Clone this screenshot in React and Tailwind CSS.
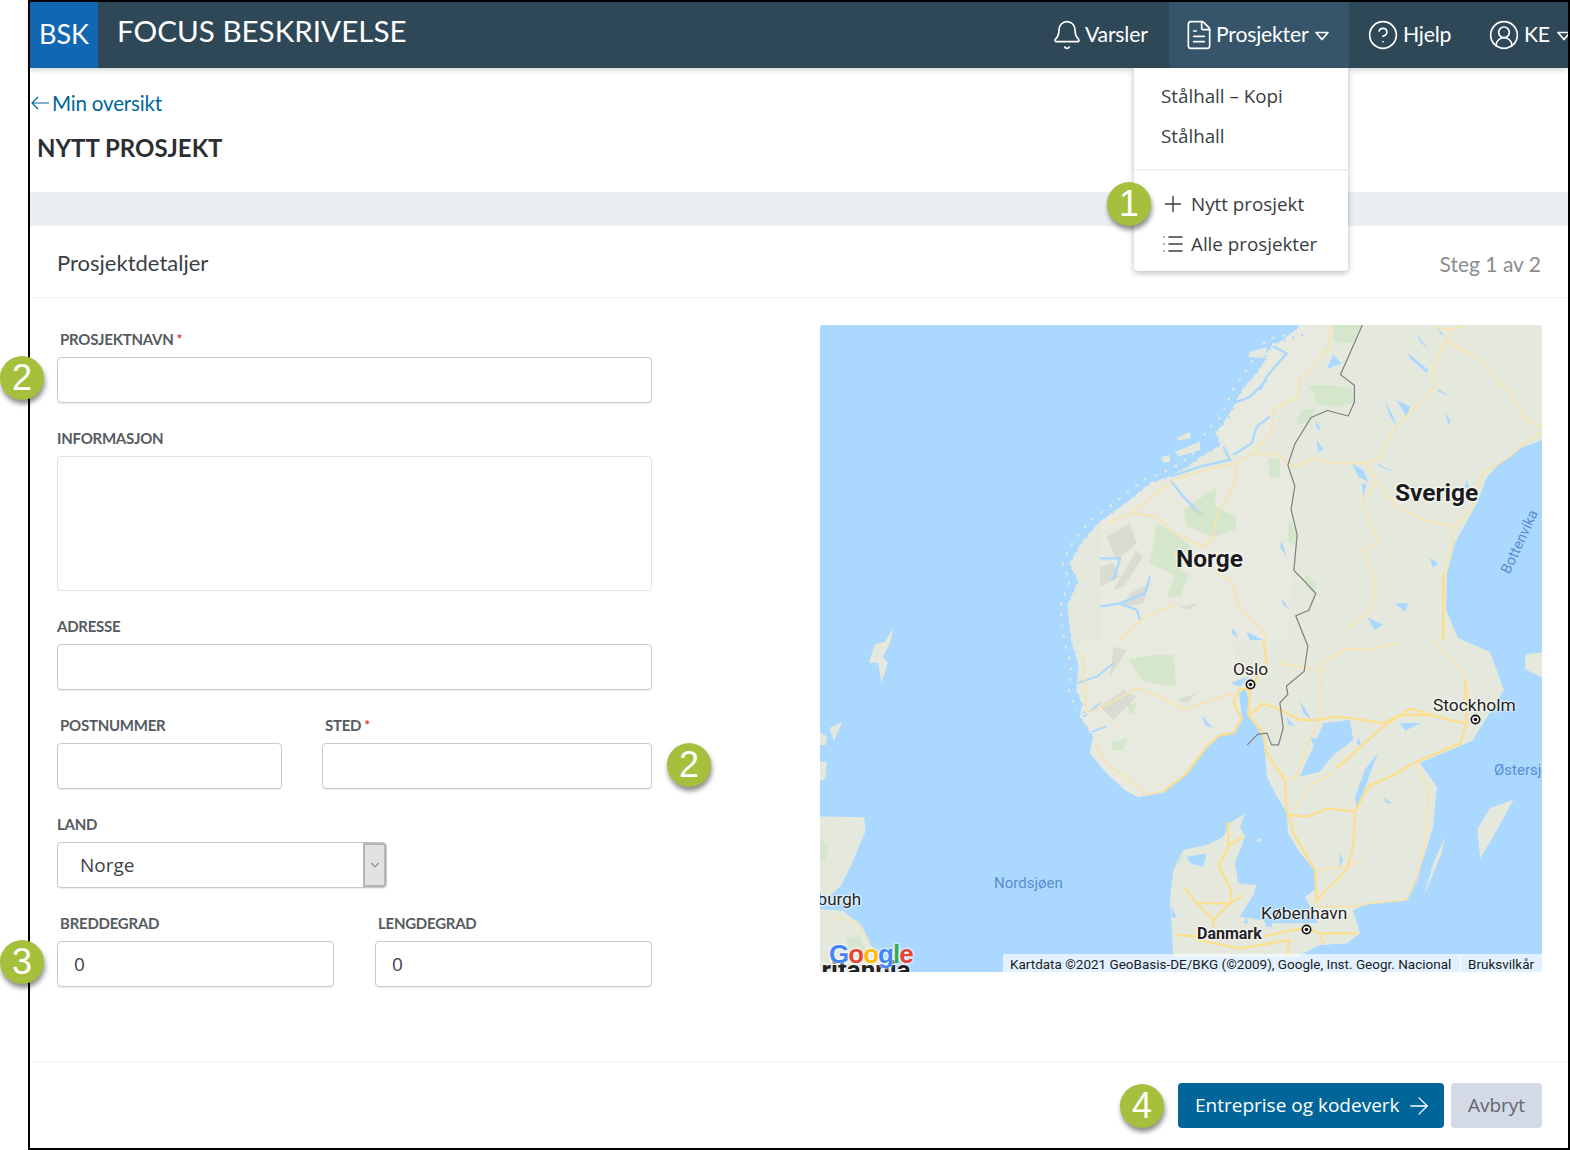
import React from "react";
import { Bell, FileText, CircleHelp, CircleUserRound, Plus, List, ArrowRight, ChevronDown } from "lucide-react";

function Caret({ className }) {
  return (
    <svg viewBox="0 0 14 10" className={className} fill="none" stroke="currentColor" strokeWidth="1.7" strokeLinejoin="round">
      <path d="M1 1.5h12L7 8.5z" />
    </svg>
  );
}

function Badge({ n, className }) {
  return (
    <div className={"absolute z-30 flex h-[44px] w-[44px] items-center justify-center rounded-full bg-[#a5c03c] font-['Liberation_Sans',sans-serif] text-[36px] leading-none text-white shadow-[1px_4px_5px_rgba(0,0,0,0.45)] " + className}>
      {n}
    </div>
  );
}

function Field({ label, req, labelPad, className, children }) {
  return (
    <div className={className}>
      <div className={"flex h-[22px] items-center text-[15px] font-bold leading-[22px] tracking-[-0.25px] text-[#555b60] " + (labelPad ? "pl-[3px]" : "")}>
        {label}
        {req && <span className="ml-[3px] text-[14px] leading-none text-[#e0343c]">*</span>}
      </div>
      <div className="mt-[7px]">{children}</div>
    </div>
  );
}

function Input({ value }) {
  return (
    <div className="flex h-[46px] w-full items-center rounded-[4px] border border-[#c9c9c9] bg-white pl-[16px] font-['Open_Sans',sans-serif] text-[19px] text-[#3c4249] shadow-[0_1px_1px_rgba(0,0,0,0.08)]">
      {value}
    </div>
  );
}

function Pin({ className }) {
  return (
    <svg viewBox="0 0 12 12" className={"absolute h-[11px] w-[11px] " + className}>
      <circle cx="6" cy="6" r="5.4" fill="#111" />
      <circle cx="6" cy="6" r="3.6" fill="#fff" />
      <circle cx="6" cy="6" r="2" fill="#111" />
    </svg>
  );
}

const halo = "[text-shadow:0_0_2px_#fff,0_0_3px_#fff,0_0_3px_#fff]";

const LAND = "#e5e9dd";
const SOUTH = "#e9eadf";
const GREEN = "#d4e7cd";
const WATER = "#aad8fe";
const ROAD = "#f7e3ae";
const HWY = "#fbdf8e";
const ROCK = "#cdd0c8";

function MapArt() {
  return (
    <svg viewBox="820 325 722 647" className="absolute inset-0 h-full w-full">
      <rect x="820" y="325" width="722" height="647" fill={WATER} />
      {/* Scandinavian mainland, in page pixels */}
      <path fill={LAND} d="M1297 325 L1303 335 L1287 342 L1273 343 L1267 353 L1250 352 L1248 357 L1267 358 L1257 372 L1243 388 L1235 403 L1228 420 L1215 432 L1220 445 L1200 457 L1187 467 L1167 477 L1150 483 L1133 497 L1120 507 L1099 522 L1081 543 L1069 564 L1078 581 L1067 606 L1071 640 L1078 665 L1076 690 L1085 711 L1080 717 L1093 737 L1090 753 L1107 773 L1125 790 L1138 797 L1163 792 L1187 773 L1207 747 L1220 735 L1237 730 L1242 717 L1233 700 L1245 688 L1248 697 L1250 717 L1263 737 L1265 753 L1267 777 L1277 797 L1287 813 L1288 833 L1300 853 L1315 870 L1317 888 L1305 897 L1317 920 L1320 945 L1347 943 L1360 933 L1353 910 L1370 903 L1407 900 L1423 860 L1433 827 L1437 787 L1420 763 L1443 753 L1472 741 L1504 690 L1490 652 L1458 638 L1446 610 L1447 573 L1455 543 L1477 503 L1487 477 L1500 463 L1523 447 L1542 440 L1542 325 Z" />
      {/* Zoomed detail of the north */}
      <g transform="translate(1100 310) scale(0.3333)">
        <g fill={SOUTH}>
          <path d="M600 50 L690 50 L640 180 L560 290 L510 380 L440 430 L400 440 L350 370 L420 260 L480 180 L520 110 Z" />
          <path d="M400 450 L560 440 L590 700 L560 990 L0 990 L0 640 L140 530 Z" />
        </g>
        <g fill={GREEN}>
          <path d="M700 45 L785 45 L755 100 L700 95 Z" />
          <path d="M620 225 L690 225 L755 235 L760 280 L710 290 L650 285 L640 250 Z" />
          <path d="M600 300 L650 295 L625 340 L590 345 Z" />
          <path d="M505 445 L540 445 L540 500 L510 505 Z" />
          <path d="M565 625 L590 660 L590 705 L565 700 Z" />
          <path d="M620 790 L650 825 L640 850 L610 810 Z" />
          <path d="M250 600 L350 530 L345 590 L410 620 L405 660 L340 680 L260 650 Z" />
          <path d="M170 640 L240 680 L280 720 L230 800 L150 760 Z" />
          <path d="M230 780 L270 790 L240 860 L200 860 Z" />
        </g>
        <g fill={ROCK} opacity="0.5">
          <path d="M20 680 L90 640 L110 700 L50 750 Z" />
          <path d="M110 720 L130 740 L70 830 L40 840 Z" />
          <path d="M0 770 L40 760 L60 800 L0 830 Z" />
          <path d="M90 850 L150 820 L130 880 L70 890 Z" />
          <path d="M240 890 L290 880 L270 900 Z" />
          <path d="M270 590 L320 610 L290 620 Z" />
        </g>
        <g fill={LAND}>
          <path d="M230 385 L270 365 L272 385 L235 392 Z" />
          <path d="M225 425 L300 395 L300 420 L235 440 Z" />
          <path d="M185 440 L210 435 L210 455 L190 458 Z" />
          <path d="M450 125 L500 112 L500 130 L455 140 Z" />
          <path d="M300 445 L360 420 L345 450 L310 460 Z" />
        </g>
        <g fill="none" stroke={WATER} strokeWidth="7">
          <path d="M510 320 L470 350 L455 400 L400 435" />
          <path d="M520 110 L560 130 L500 200 L480 240" />
          <path d="M400 280 L450 260 L500 210" />
          <path d="M370 410 L390 450 L300 470 L210 500" />
          <path d="M210 510 L250 560 L290 600" />
          <path d="M0 745 L60 745 L40 810" />
          <path d="M0 890 L60 880 L135 850 L150 800" />
          <path d="M60 880 L110 900 L120 930" />
        </g>
        <g fill={WATER}>
          <path d="M755 460 L790 480 L805 515 L775 500 Z" />
          <path d="M800 525 L790 560 L785 520 Z" />
          <path d="M700 135 L725 160 L680 178 Z" />
          <path d="M650 390 L672 420 L655 425 Z" />
          <path d="M925 130 L985 180 L980 190 L930 145 Z" />
          <path d="M855 270 L880 320 L890 350 L870 320 Z" />
          <path d="M890 270 L930 290 L920 320 Z" />
          <path d="M1035 305 L1052 335 L1045 345 Z" />
          <path d="M1010 235 L1045 255 L1015 245 Z" />
          <path d="M830 460 L890 490 L840 470 Z" />
          <path d="M545 690 L560 740 L540 710 Z" />
          <path d="M545 865 L570 900 L550 885 Z" />
          <path d="M800 920 L850 945 L825 960 Z" />
          <path d="M885 880 L925 880 L915 905 Z" />
          <path d="M990 745 L1015 760 L1000 775 Z" />
          <path d="M645 330 L665 360 L650 355 Z" />
          <path d="M950 70 L985 120 L960 95 Z" />
          <path d="M1010 50 L1040 85 L1020 70 Z" />
          <path d="M1100 510 L1110 540 L1095 530 Z" />
          <path d="M400 955 L415 985 L395 970 Z" />
          <path d="M440 965 L490 990 L450 990 Z" />
        </g>
        <g fill="none" stroke={ROAD} strokeWidth="5" strokeLinejoin="round">
          <path d="M690 45 L690 110 L600 210 L595 260 L520 300 L515 360 L460 430 L410 460 L405 520 L350 620 L340 680 L310 710 L225 670 L170 620 L100 610 L20 640" />
          <path d="M410 460 L310 480 L220 510 L140 575 L90 605" />
          <path d="M460 432 L530 432 L580 470 L650 445 L690 460 L790 460 L830 450 L890 350 L1005 230 L1000 170 L1040 90 L1050 50" />
          <path d="M1040 90 L1140 150 L1220 240 L1280 330 L1326 350" />
          <path d="M1326 365 L1260 410 L1230 440 L1150 490 L1115 600 L1060 650 L970 630 L890 590 L830 510 L800 460" />
          <path d="M830 510 L790 570 L800 620 L840 700 L790 720 L830 820 L810 900 L740 960" />
          <path d="M1060 650 L1060 700 L1030 800" />
          <path d="M340 785 L395 815 L420 900 L480 950 L500 990" />
          <path d="M230 880 L130 925 L60 990" />
          <path d="M1010 50 L1040 60 L1090 50" />
        </g>
        <path fill="none" stroke={HWY} strokeWidth="8" d="M1030 790 L1030 990" />
      </g>
      {/* Zoomed detail of the south */}
      <g transform="translate(1000 640) scale(0.3333)">
        <g fill={SOUTH}>
          <path d="M240 0 L700 0 L720 180 L725 230 L710 270 L660 285 L620 320 L560 400 L490 455 L415 470 L375 450 L320 400 L270 340 L280 290 L240 230 L260 100 Z" />
        </g>
        <g fill={GREEN}>
          <path d="M385 60 L450 45 L520 45 L530 140 L430 125 Z" />
          <path d="M335 305 L385 295 L370 330 L335 330 Z" />
          <path d="M380 190 L410 190 L400 220 L385 220 Z" />
        </g>
        <g fill={ROCK} opacity="0.5">
          <path d="M300 200 L370 150 L410 170 L340 240 Z" />
          <path d="M340 20 L380 30 L330 110 Z" />
          <path d="M530 180 L590 160 L560 190 Z" />
        </g>
        <g fill="none" stroke={WATER} strokeWidth="6">
          <path d="M230 130 L290 110 L340 70" />
          <path d="M250 230 L300 190" />
          <path d="M275 275 L320 260" />
        </g>
        {/* Denmark */}
        <path fill={LAND} d="M735 520 L690 550 L670 590 L620 615 L550 630 L520 690 L510 780 L515 860 L520 950 L900 950 L920 870 L800 860 L790 840 L720 830 L760 765 L770 735 L715 730 L705 670 L735 590 L720 560 Z" />
        <path fill={LAND} d="M815 850 L950 850 L1080 880 L1040 910 L960 915 L900 945 L820 930 Z" />
        <path fill={LAND} d="M1335 590 L1300 670 L1270 770 L1290 725 L1325 640 Z" />
        <path fill={LAND} d="M765 600 L785 595 L780 607 Z" />
        <path fill={GREEN} d="M555 630 L525 680 L545 665 Z" />
        <g fill={WATER}>
          <path d="M560 650 L620 640 L610 680 L570 670 Z" />
          <path d="M515 800 L530 830 L515 835 Z" />
          <path d="M740 830 L730 850 L745 850 Z" />
        </g>
        {/* Lakes */}
        <g fill={WATER}>
          <path d="M970 250 L1050 240 L1060 300 L1000 345 L960 395 L900 410 L940 320 Z" />
          <path d="M1135 335 L1100 430 L1070 510 L1065 470 L1095 390 Z" />
          <path d="M1200 250 L1265 248 L1215 272 Z" />
          <path d="M1018 640 L1030 660 L1020 680 Z" />
          <path d="M1150 470 L1175 490 L1160 490 Z" />
          <path d="M900 180 L935 240 L910 220 Z" />
          <path d="M605 225 L640 265 L615 255 Z" />
          <path d="M1075 290 L1085 320 L1070 310 Z" />
          <path d="M690 130 L745 110 L720 140 Z" />
          <path d="M860 230 L885 260 L865 255 Z" />
          <path d="M930 290 L980 310 L950 340 Z" />
        </g>
        <g fill="none" stroke={ROAD} strokeWidth="5" strokeLinejoin="round">
          <path d="M1250 370 L1285 450 L1280 600 L1250 720 L1220 780 L1110 790 L1060 800 L950 800" />
          <path d="M950 690 L1040 680 L1090 660" />
          <path d="M555 210 L480 170 L410 145 L330 190 L260 220 L250 40" />
          <path d="M285 310 L320 370 L375 410 L440 465 L490 455" />
          <path d="M555 210 L650 175 L700 160" />
          <path d="M960 240 L965 70 L1040 25 L1100 30 L1190 10" />
          <path d="M960 250 L930 290 L890 410 L860 415" />
          <path d="M1300 0 L1395 100 L1410 180" />
          <path d="M880 510 L940 430 L1000 400" />
          <path d="M840 70 L960 90" />
          <path d="M1150 380 L1140 400" />
        </g>
        <g fill="none" stroke={HWY} strokeWidth="7" strokeLinejoin="round">
          <path d="M750 150 L745 225 L790 280 L800 340 L855 420 L860 510 L880 580 L945 690 L950 770 L945 790" />
          <path d="M860 525 L920 530 L985 505 L1065 515 L1105 440 L1190 400 L1250 365 L1380 310 L1400 250 L1350 240 L1290 225 L1235 205 L1155 255 L1010 385" />
          <path d="M1065 515 L1060 620 L1040 690 L950 780" />
          <path d="M750 150 L720 145 L700 185 L725 235 L700 280 L660 285 L620 320 L560 400 L490 455" />
          <path d="M750 225 L790 190 L840 210 L900 240 L960 240 L1000 230 L1060 235 L1150 250 L1200 225 L1300 225" />
          <path d="M750 150 L800 60 L790 0" />
          <path d="M685 545 L685 620 L655 680 L695 750 L690 790 L640 840 L590 790 L555 745" />
          <path d="M590 790 L690 790 L730 765" />
          <path d="M730 590 L680 620" />
          <path d="M530 885 L600 890" />
          <path d="M790 890 L880 870 L920 865 L960 880 L1075 880" />
          <path d="M590 900 L720 925 L870 900 L860 950" />
          <path d="M640 840 L640 860" />
          <path d="M960 880 L970 910" />
          <path d="M1395 120 L1400 250" />
        </g>
      </g>
      {/* Crinkled west coast */}
      <path fill="none" stroke={WATER} strokeWidth="2.5" strokeDasharray="2 7" d="M1303 335 L1273 343 L1267 353 L1257 372 L1243 388 L1235 403 L1228 420 L1215 432 L1220 445 L1200 457 L1187 467 L1167 477 L1150 483 L1133 497 L1120 507 L1099 522 L1081 543 L1069 564 L1078 581 L1067 606 L1071 640 L1078 665 L1076 690 L1085 711 L1080 717 L1093 737" />
      <path fill="none" stroke={LAND} strokeWidth="2" strokeDasharray="3 8" d="M1296 333 L1268 339 L1258 350 L1248 368 L1236 384 L1228 400 L1221 417 L1208 429 L1193 454 L1180 464 L1160 474 L1143 480 L1126 494 L1113 504 L1092 519 L1074 540 L1062 562 L1070 581 L1060 606 L1064 640 L1071 665 L1069 690 L1076 711" />
      {/* Overview coordinates for the far left and islands */}
      <g transform="translate(820 320) scale(0.4655 0.4207)">
        <g fill={LAND}>
          <path d="M158 730 L150 770 L135 800 L145 815 L132 865 L125 815 L105 815 L118 770 L140 765 Z" />
          <path d="M1490 1140 L1440 1160 L1412 1210 L1418 1280 L1445 1230 L1470 1180 Z" />
          <path d="M1515 795 L1551 790 L1551 850 L1515 830 Z" />
          <path d="M0 980 L15 990 L12 1010 L0 1010 Z" />
          <path d="M0 1050 L14 1050 L12 1090 L0 1095 Z" />
          <path d="M20 970 L48 955 L30 1000 Z" />
          <path d="M0 1180 L95 1182 L98 1215 L65 1300 L45 1345 L20 1370 L0 1365 Z" />
          <path d="M0 1400 L50 1405 L90 1440 L115 1500 L150 1550 L0 1550 Z" />
        </g>
        <path fill={GREEN} d="M0 1230 L20 1250 L10 1290 L0 1280 Z" />
        <path fill={GREEN} d="M55 1470 L85 1465 L100 1500 L65 1505 Z" />
        <path fill="none" stroke={ROAD} strokeWidth="3" d="M20 1420 L80 1430 L110 1490 L145 1530" />
        <path fill="none" stroke="#7e7f80" strokeWidth="2.6" strokeLinejoin="round" d="M1165 12 L1118 130 L1148 155 L1148 195 L1135 228 L1090 215 L1055 232 L1020 295 L1005 345 L1020 395 L1012 450 L1025 510 L1018 595 L1040 620 L1065 650 L1050 690 L1022 703 L1048 775 L1040 835 L1002 870 L1005 890 L988 910 L995 970 L985 1010 L970 1010 L960 982 L940 985 L918 1010" />
      </g>
    </svg>
  );
}

function GoogleMap() {
  return (
    <div className="relative mt-[27px] h-[647px] w-[722px] shrink-0 overflow-hidden rounded-[3px] font-['Roboto',sans-serif]">
      <MapArt />
      <span className={"absolute left-[575px] top-[153px] text-[24.5px] font-bold leading-[30px] text-[#1b1b1b] " + halo}>Sverige</span>
      <span className={"absolute left-[356px] top-[219px] text-[24.5px] font-bold leading-[30px] text-[#1b1b1b] " + halo}>Norge</span>
      <span className={"absolute left-[413px] top-[334px] text-[17.4px] leading-[20px] text-[#222] " + halo}>Oslo</span>
      <Pin className="left-[425px] top-[354px]" />
      <span className={"absolute left-[613px] top-[370px] text-[17.4px] leading-[20px] text-[#222] " + halo}>Stockholm</span>
      <Pin className="left-[650px] top-[389px]" />
      <span className={"absolute left-[441px] top-[578px] text-[17.4px] leading-[20px] text-[#222] " + halo}>København</span>
      <Pin className="left-[481px] top-[599px]" />
      <span className={"absolute left-[377px] top-[599px] text-[16px] font-bold leading-[20px] text-[#222] " + halo}>Danmark</span>
      <span className="absolute left-[174px] top-[549px] text-[15px] leading-[18px] text-[#5a8dd0]">Nordsjøen</span>
      <span className="absolute left-[674px] top-[436px] text-[15px] leading-[18px] text-[#5a8dd0]">Østersjøen</span>
      <span className="absolute left-[666px] top-[208px] rotate-[-65deg] text-[14.5px] leading-[18px] text-[#5a8dd0]">Bottenvika</span>
      <span className={"absolute left-[-35px] top-[564px] text-[17px] leading-[20px] text-[#222] " + halo}>Edinburgh</span>
      <span className={"absolute left-[-15px] top-[631px] text-[26px] font-bold leading-[28px] text-[#222] " + halo}>Britannia</span>
      <span className="absolute left-[9px] top-[611px] flex font-['Liberation_Sans',sans-serif] text-[26px] font-bold leading-[36px] tracking-[-1px] [text-shadow:0_0_3px_#fff,0_0_3px_#fff]">
        <span className="text-[#4285f4]">G</span>
        <span className="text-[#ea4335]">o</span>
        <span className="text-[#fbbc05]">o</span>
        <span className="text-[#4285f4]">g</span>
        <span className="text-[#34a853]">l</span>
        <span className="text-[#ea4335]">e</span>
      </span>
      <div className="absolute bottom-0 right-0 flex h-[18px] w-[539px] items-center bg-white/65 pl-[7px] pt-[1px] text-[13.5px] leading-[18px] text-[#1c1c1c]">
        <span className="w-[450px] shrink-0 whitespace-nowrap">Kartdata ©2021 GeoBasis-DE/BKG (©2009), Google, Inst. Geogr. Nacional</span>
        <span className="h-full w-[1px] shrink-0 bg-white"></span>
        <span className="pl-[7px]">Bruksvilkår</span>
      </div>
    </div>
  );
}

export default function App() {
  return (
    <div className="relative h-[1150px] w-[1570px] overflow-hidden bg-white font-[Lato,sans-serif]">
      <div className="ml-[28px] flex h-[1150px] w-[1542px] flex-col border-2 border-black bg-white">
        {/* Header */}
        <header className="relative z-10 flex h-[66px] shrink-0 items-stretch overflow-hidden bg-[#2f4858] text-white shadow-[0_2px_6px_rgba(0,0,0,0.18)]">
          <div className="flex w-[68px] items-center justify-center bg-[#1167b1] pb-[4px] text-[27px] leading-none">BSK</div>
          <div className="ml-[19px] flex items-center pb-[8px] text-[29.6px] leading-none">FOCUS BESKRIVELSE</div>
          <nav className="ml-auto flex items-stretch text-[21.2px] tracking-[-0.2px]">
            <div className="flex w-[135px] items-center pl-[17px]">
              <Bell className="h-[32px] w-[32px] shrink-0" strokeWidth={1.25} />
              <span className="ml-[2px]">Varsler</span>
            </div>
            <div className="flex w-[180px] items-center bg-[#36556a] pl-[14px]">
              <FileText className="h-[32px] w-[32px] shrink-0" strokeWidth={1.25} />
              <span className="ml-[1px]">Prosjekter</span>
              <Caret className="ml-[7px] mt-[1px] h-[10px] w-[14px]" />
            </div>
            <div className="flex w-[120px] items-center pl-[18px]">
              <CircleHelp className="h-[32px] w-[32px] shrink-0" strokeWidth={1.25} />
              <span className="ml-[4px]">Hjelp</span>
            </div>
            <div className="flex w-[99px] items-center overflow-hidden pl-[19px]">
              <CircleUserRound className="h-[32px] w-[32px] shrink-0" strokeWidth={1.25} />
              <span className="ml-[4px]">KE</span>
              <Caret className="ml-[7px] mt-[1px] h-[10px] w-[14px] shrink-0" />
            </div>
          </nav>
        </header>

        {/* Title area */}
        <div className="h-[124px] shrink-0">
          <a className="mt-[20px] flex h-[30px] items-center pl-[1px] text-[20.6px] leading-[30px] tracking-[-0.2px] text-[#00679b]">
            <svg viewBox="0 0 18 14" className="h-[14px] w-[18px] shrink-0" fill="none" stroke="currentColor" strokeWidth="1.2">
              <path d="M18 7H1M7 1L1 7l6 6" />
            </svg>
            <span className="ml-[3px]">Min oversikt</span>
          </a>
          <h1 className="mt-[15px] pl-[7px] text-[24px] font-bold leading-[30px] text-[#2b2f33]">NYTT PROSJEKT</h1>
        </div>

        <div className="h-[34px] shrink-0 bg-[#ebeef2]"></div>

        {/* Card header */}
        <div className="flex h-[72px] shrink-0 items-center justify-between border-b border-[#f0f1f2] pl-[27px] pr-[27px] pt-[3px]">
          <span className="text-[22px] leading-none text-[#3a3f44]">Prosjektdetaljer</span>
          <span className="text-[21px] leading-none text-[#8a8d90]">Steg 1 av 2</span>
        </div>

        {/* Body */}
        <div className="flex h-[763px] shrink-0 justify-between pl-[27px] pr-[26px]">
          <div className="flex w-[595px] flex-col gap-y-[24px] pt-[30px]">
            <Field label="PROSJEKTNAVN" req labelPad>
              <Input />
            </Field>
            <Field label="INFORMASJON">
              <div className="h-[135px] w-full rounded-[4px] border border-[#e2e2e2] bg-white"></div>
            </Field>
            <Field label="ADRESSE">
              <Input />
            </Field>
            <div className="flex gap-x-[40px]">
              <Field label="POSTNUMMER" labelPad className="w-[225px]">
                <Input />
              </Field>
              <Field label="STED" req labelPad className="flex-1">
                <Input />
              </Field>
            </div>
            <Field label="LAND">
              <div className="flex h-[46px] w-[330px] items-stretch overflow-hidden rounded-[4px] border border-[#c9c9c9] bg-white shadow-[0_1px_1px_rgba(0,0,0,0.08)]">
                <span className="flex flex-1 items-center pl-[22px] font-['Open_Sans',sans-serif] text-[19px] text-[#3c4249]">Norge</span>
                <span className="flex w-[23px] items-center justify-center border-2 border-[#b5b5b5] bg-[#e2e2e2]">
                  <ChevronDown className="h-[14px] w-[14px] text-[#444]" strokeWidth={1.6} />
                </span>
              </div>
            </Field>
            <div className="flex gap-x-[41px]">
              <Field label="BREDDEGRAD" labelPad className="w-[277px]">
                <Input value="0" />
              </Field>
              <Field label="LENGDEGRAD" labelPad className="flex-1">
                <Input value="0" />
              </Field>
            </div>
          </div>
          <GoogleMap />
        </div>

        {/* Footer */}
        <div className="flex flex-1 items-start justify-end gap-x-[7px] border-t border-[#f0f1f2] pr-[26px] pt-[21px] font-['Open_Sans',sans-serif] text-[19px]">
          <button className="flex h-[45px] w-[266px] items-center justify-start rounded-[4px] bg-[#006699] pl-[17px] text-white">
            Entreprise og kodeverk
            <ArrowRight className="ml-[5px] h-[28px] w-[28px]" strokeWidth={1.1} />
          </button>
          <button className="h-[45px] w-[91px] rounded-[4px] bg-[#d3d9e5] text-[#62666e]">Avbryt</button>
        </div>
      </div>

      {/* Dropdown */}
      <div className="absolute left-[1134px] top-[68px] z-20 flex h-[203px] w-[214px] flex-col rounded-b-[4px] bg-white font-['Open_Sans',sans-serif] text-[18.8px] text-[#383d42] shadow-[0_2px_6px_rgba(0,0,0,0.28)]">
        <div className="flex h-[103px] shrink-0 flex-col border-b-2 border-[#eff0f1] pl-[27px] pt-[8px]">
          <span className="h-[40px] leading-[40px]">Stålhall – Kopi</span>
          <span className="h-[40px] leading-[40px]">Stålhall</span>
        </div>
        <div className="flex flex-col pl-[26px] pt-[13px]">
          <div className="flex h-[40px] items-center">
            <Plus className="h-[26px] w-[26px]" strokeWidth={1.3} />
            <span className="ml-[5px]">Nytt prosjekt</span>
          </div>
          <div className="flex h-[40px] items-center">
            <span className="flex h-[26px] w-[26px] items-center justify-center">
              <List className="h-[24px] w-[24px]" strokeWidth={1.5} />
            </span>
            <span className="ml-[5px]">Alle prosjekter</span>
          </div>
        </div>
      </div>

      <Badge n="1" className="left-[1107px] top-[182px]" />
      <Badge n="2" className="left-[0px] top-[356px]" />
      <Badge n="2" className="left-[667px] top-[743px]" />
      <Badge n="3" className="left-[0px] top-[940px]" />
      <Badge n="4" className="left-[1120px] top-[1084px]" />
    </div>
  );
}
